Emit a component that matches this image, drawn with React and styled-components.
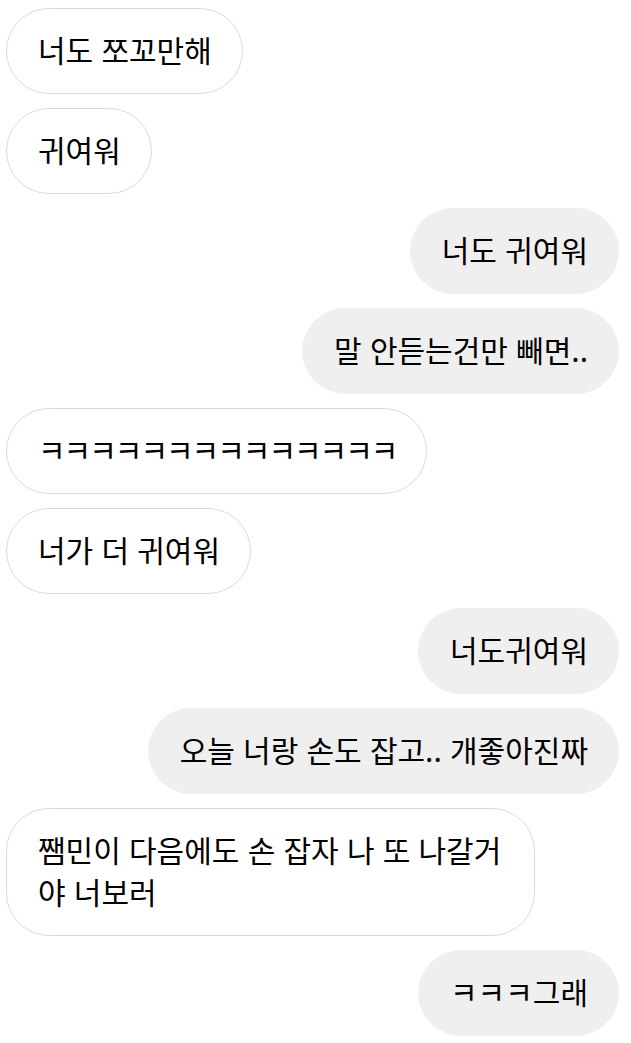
import React from "react";
import styled, { createGlobalStyle } from "styled-components";

const Global = createGlobalStyle`
  html, body { margin: 0; padding: 0; background: #ffffff; }
  body { font-family: "Noto Sans CJK KR", "Noto Sans", sans-serif; }
`;

const Thread = styled.div`
  display: flex;
  flex-direction: column;
  gap: 14px;
  padding: 8px 12px 8px 6px;
`;

const Row = styled.div`
  display: flex;
  justify-content: ${(p) => (p.$mine ? "flex-end" : "flex-start")};
`;

const Bubble = styled.div`
  box-sizing: border-box;
  max-width: 529px;
  padding: 19px 30px 23px 31px;
  border-radius: 43px;
  font-size: 30px;
  line-height: 42px;
  word-spacing: 1.5px;
  letter-spacing: ${(p) => (p.$tight ? "-2px" : "0")};
  color: #000;
  background: ${(p) => (p.$mine ? "#efefef" : "#ffffff")};
  border: 1px solid ${(p) => (p.$mine ? "#efefef" : "#dbdbdb")};
`;

const messages = [
  { mine: false, text: "너도 쪼꼬만해" },
  { mine: false, text: "귀여워" },
  { mine: true, text: "너도 귀여워" },
  { mine: true, text: "말 안듣는건만 빼면.." },
  { mine: false, text: "ㅋㅋㅋㅋㅋㅋㅋㅋㅋㅋㅋㅋㅋㅋ", tight: true },
  { mine: false, text: "너가 더 귀여워" },
  { mine: true, text: "너도귀여워" },
  { mine: true, text: "오늘 너랑 손도 잡고.. 개좋아진짜" },
  { mine: false, text: "쨈민이 다음에도 손 잡자 나 또 나갈거야 너보러" },
  { mine: true, text: "ㅋㅋㅋ그래" },
];

export default function App() {
  return (
    <>
      <Global />
      <Thread>
        {messages.map((m, i) => (
          <Row key={i} $mine={m.mine}>
            <Bubble $mine={m.mine} $tight={m.tight}>
              {m.text}
            </Bubble>
          </Row>
        ))}
      </Thread>
    </>
  );
}
